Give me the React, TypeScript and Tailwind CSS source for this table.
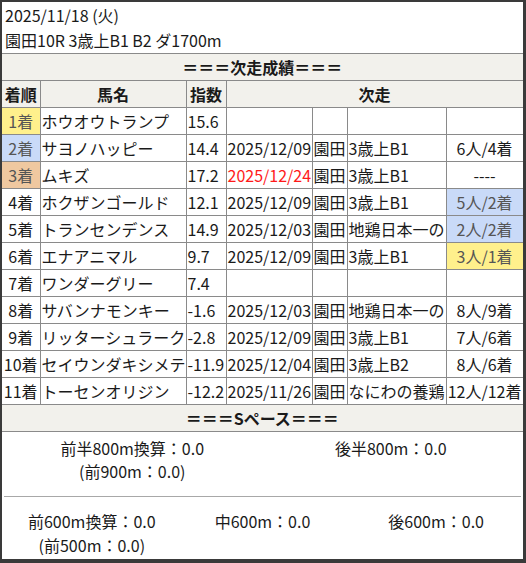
const rankBg: Record<string, string> = {
  y: "bg-[#fff08c] text-[#555]",
  b: "bg-[#c9daf8] text-[#555]",
  o: "bg-[#efc8a0] text-[#555]",
};

type Row = {
  rank: string;
  rc?: string;
  name: string;
  idx: string;
  date?: string;
  red?: boolean;
  place?: string;
  race?: string;
  res?: string;
  resc?: string;
};

const rows: Row[] = [
  { rank: "1着", rc: "y", name: "ホウオウトランプ", idx: "15.6" },
  { rank: "2着", rc: "b", name: "サヨノハッピー", idx: "14.4", date: "2025/12/09", place: "園田", race: "3歳上B1", res: "6人/4着" },
  { rank: "3着", rc: "o", name: "ムキズ", idx: "17.2", date: "2025/12/24", red: true, place: "園田", race: "3歳上B1", res: "----" },
  { rank: "4着", name: "ホクザンゴールド", idx: "12.1", date: "2025/12/09", place: "園田", race: "3歳上B1", res: "5人/2着", resc: "b" },
  { rank: "5着", name: "トランセンデンス", idx: "14.9", date: "2025/12/03", place: "園田", race: "地鶏日本一の", res: "2人/2着", resc: "b" },
  { rank: "6着", name: "エナアニマル", idx: "9.7", date: "2025/12/09", place: "園田", race: "3歳上B1", res: "3人/1着", resc: "y" },
  { rank: "7着", name: "ワンダーグリー", idx: "7.4" },
  { rank: "8着", name: "サバンナモンキー", idx: "-1.6", date: "2025/12/03", place: "園田", race: "地鶏日本一の", res: "8人/9着" },
  { rank: "9着", name: "リッターシュラーク", idx: "-2.8", date: "2025/12/09", place: "園田", race: "3歳上B1", res: "7人/6着" },
  { rank: "10着", name: "セイウンダキシメテ", idx: "-11.9", date: "2025/12/04", place: "園田", race: "3歳上B2", res: "8人/6着" },
  { rank: "11着", name: "トーセンオリジン", idx: "-12.2", date: "2025/11/26", place: "園田", race: "なにわの養鶏", res: "12人/12着" },
];

const td = "border border-[#8a8a8a] border-l-0 overflow-hidden whitespace-nowrap p-0";

const Band = ({ text }: { text: string }) => (
  <tr className="h-[27px]">
    <td colSpan={7} className={`${td} bg-[#f2f1ec] text-center font-bold`}>
      {text}
    </td>
  </tr>
);

export default function App() {
  return (
    <div
      className="w-[526px] h-[563px] border-l-2 border-t-2 border-r-[3px] border-b-4 border-[#3a3a3a] bg-white text-[16px] text-[#1a1a1a] overflow-hidden"
      style={{ fontFamily: '"Noto Sans CJK JP", "Noto Sans", sans-serif' }}
    >
      <div className="h-[51px] pt-[1px] pl-[3px] leading-[25px]">
        <div>2025/11/18 (火)</div>
        <div>園田10R 3歳上B1 B2 ダ1700m</div>
      </div>
      <table className="table-fixed border-collapse w-[521px] leading-[20px]">
        <colgroup>
          <col className="w-[38px]" />
          <col className="w-[146px]" />
          <col className="w-[40px]" />
          <col className="w-[86px]" />
          <col className="w-[35px]" />
          <col className="w-[99px]" />
          <col className="w-[77px]" />
        </colgroup>
        <tbody>
          <Band text="＝＝＝次走成績＝＝＝" />
          <tr className="h-[27px] bg-[#f2f1ec] font-bold">
            <td className={`${td} text-center`}>着順</td>
            <td className={`${td} text-center`}>馬名</td>
            <td className={`${td} text-center`}>指数</td>
            <td colSpan={4} className={`${td} text-center`}>
              次走
            </td>
          </tr>
          {rows.map((r) => (
            <tr key={r.rank} className="h-[27px]">
              <td className={`${td} text-center ${r.rc ? rankBg[r.rc] : ""}`}>{r.rank}</td>
              <td className={`${td} pl-[1px]`}>{r.name}</td>
              <td className={`${td} pl-[1px]`}>{r.idx}</td>
              <td className={`${td} pl-[1px] ${r.red ? "text-[#ff1a1a]" : ""}`}>{r.date}</td>
              <td className={`${td} pl-[1px]`}>{r.place}</td>
              <td className={`${td} pl-[1px]`}>{r.race}</td>
              <td className={`${td} text-center ${r.resc ? rankBg[r.resc] : ""}`}>{r.res}</td>
            </tr>
          ))}
          <Band text="＝＝＝Sペース＝＝＝" />
        </tbody>
      </table>
      <div className="h-[64px] grid grid-cols-2 pt-[5px] leading-[23px] text-center">
        <div>
          <div>前半800m換算：0.0</div>
          <div>(前900m：0.0)</div>
        </div>
        <div className="pr-[4px]">後半800m：0.0</div>
      </div>
      <div className="mx-[2px] border-t border-[#a8a8a8]" />
      <div className="grid grid-cols-3 pt-[12px] leading-[24px] text-center">
        <div className="pl-[6px]">
          <div>前600m換算：0.0</div>
          <div>(前500m：0.0)</div>
        </div>
        <div>中600m：0.0</div>
        <div>後600m：0.0</div>
      </div>
    </div>
  );
}
